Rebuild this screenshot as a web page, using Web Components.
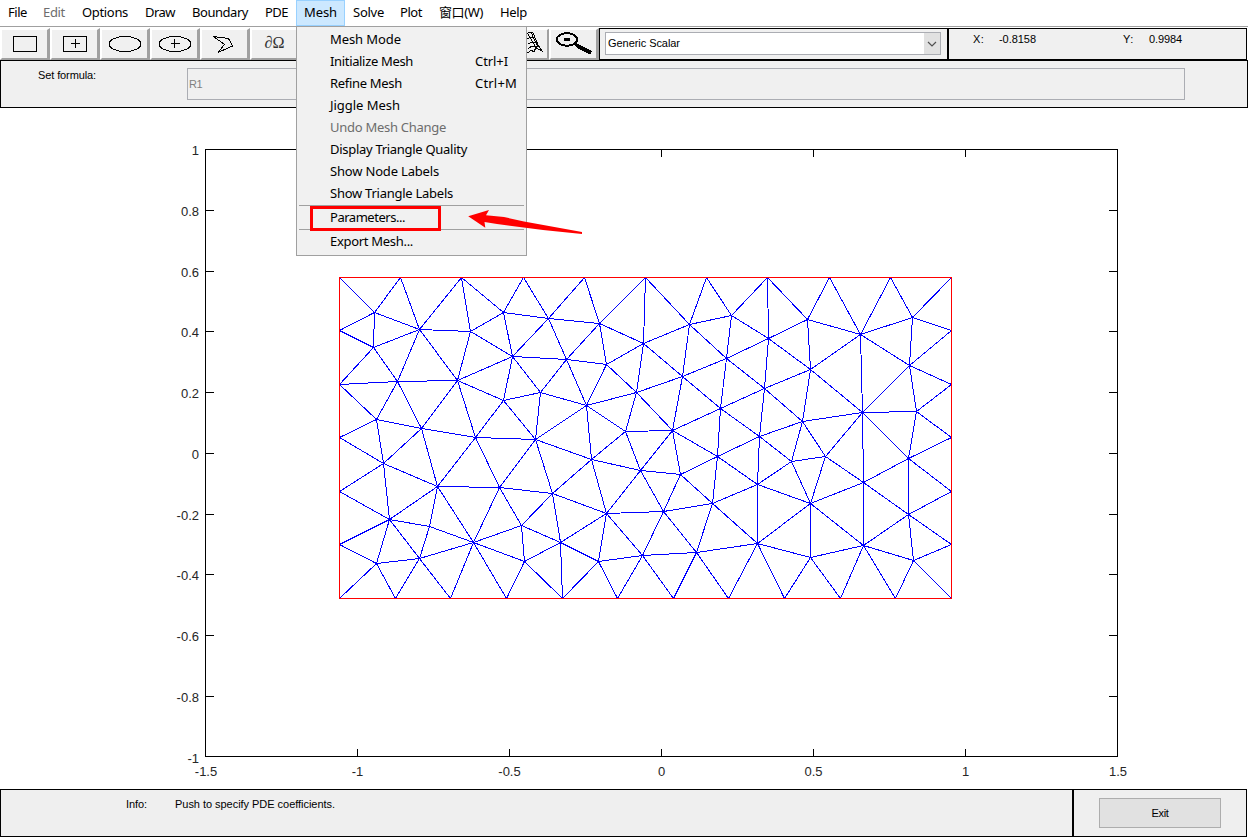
<!DOCTYPE html>
<html lang="en"><head><meta charset="utf-8"><title>PDE Modeler</title>
<style>html,body{margin:0;height:838px;overflow:hidden;background:#fff}</style></head>
<body><pde-app></pde-app>
<script>
const define = (name, html, setup) => customElements.define(name, class extends HTMLElement {
  connectedCallback() {
    if (this.shadowRoot) return;
    const t = document.createElement('template');
    t.innerHTML = html;
    this.attachShadow({mode: 'open'}).append(t.content.cloneNode(true));
    if (setup) setup(this, this.shadowRoot);
  }
});

// Label whose tracking is adjusted so the text fills the width in "w".
define('fit-text', `<style>:host{display:inline-block;white-space:pre}span{display:inline-block}</style><span><slot></slot></span>`, (el, root) => {
  const s = root.querySelector('span'), w = +el.getAttribute('w');
  if (!w) return;
  const gap = (w - s.getBoundingClientRect().width) / [...el.textContent].length;
  s.style.letterSpacing = gap.toFixed(3) + 'px';
  el.style.width = w + 'px';
});

define('menu-title', `<style>
:host{display:flex;box-sizing:border-box;height:26px;padding:0 8px 2px;align-items:center;margin-right:1px}
:host([off]){color:#6d6d6d}
:host([open]){background:#cce8ff;box-shadow:inset 0 0 0 1px #99d1ff}
</style><slot></slot>`);

define('menu-bar', `<style>
:host{display:flex;box-sizing:border-box;height:27px;border-bottom:1px solid #a0a0a0;background:#fff;font:13px/18px "Noto Sans","Noto Sans CJK SC",sans-serif;color:#000}
.tight{margin-right:0}
</style>
<menu-title class="tight"><fit-text w="19">File</fit-text></menu-title>
<menu-title off><fit-text w="22">Edit</fit-text></menu-title>
<menu-title><fit-text w="46">Options</fit-text></menu-title>
<menu-title><fit-text w="30">Draw</fit-text></menu-title>
<menu-title><fit-text w="56">Boundary</fit-text></menu-title>
<menu-title class="tight"><fit-text w="23">PDE</fit-text></menu-title>
<menu-title open class="tight"><fit-text w="33">Mesh</fit-text></menu-title>
<menu-title class="tight"><fit-text w="31">Solve</fit-text></menu-title>
<menu-title><fit-text w="22">Plot</fit-text></menu-title>
<menu-title><fit-text w="44">窗口(W)</fit-text></menu-title>
<menu-title><fit-text w="27">Help</fit-text></menu-title>`);

define('menu-row', `<style>
:host{display:flex;box-sizing:border-box;height:22px;align-items:center;padding:0 0 2px 33px}
:host([off]){color:#6d6d6d}
.main{width:145px}
</style><div class="main"><slot></slot></div><slot name="key"></slot>`);

define('drop-menu', `<style>
:host{display:block;box-sizing:border-box;position:absolute;left:296px;top:26px;width:231px;height:230px;padding-top:2px;background:#f1f1f1;border:1px solid #a0a0a0;font:13px/18px "Noto Sans",sans-serif;color:#000}
hr{border:0;height:1px;background:#a0a0a0;margin:0 2px 0}
hr+menu-row{height:23px;padding-bottom:1px}
</style>
<menu-row><fit-text w="71">Mesh Mode</fit-text></menu-row>
<menu-row><fit-text w="83">Initialize Mesh</fit-text><fit-text slot="key" w="33">Ctrl+I</fit-text></menu-row>
<menu-row><fit-text w="72">Refine Mesh</fit-text><fit-text slot="key" w="42">Ctrl+M</fit-text></menu-row>
<menu-row><fit-text w="70">Jiggle Mesh</fit-text></menu-row>
<menu-row off><fit-text w="116">Undo Mesh Change</fit-text></menu-row>
<menu-row><fit-text w="137">Display Triangle Quality</fit-text></menu-row>
<menu-row><fit-text w="109">Show Node Labels</fit-text></menu-row>
<menu-row><fit-text w="123">Show Triangle Labels</fit-text></menu-row>
<hr><menu-row><fit-text w="75">Parameters...</fit-text></menu-row>
<hr><menu-row><fit-text w="83">Export Mesh...</fit-text></menu-row>`);

// Callout drawn over the menu: frame and arrow.
define('call-out', `<style>:host{display:block;position:absolute;left:300px;top:200px;width:290px;height:40px}svg{display:block}</style>
<svg width="290" height="40"><rect x="11.5" y="7.5" width="128" height="22" fill="none" stroke="#f00" stroke-width="3"/>
<path d="M168.2 16.3 189 10 186 15.2 204 17 224 21.5 282 32V34L243 30 197 24 184.5 22 185.3 27.8Z" fill="#f00"/></svg>`);

define('tool-button', `<style>
:host{display:block;box-sizing:border-box;width:50px;height:32px;flex:none}
svg{display:block;width:100%;height:32px}
</style><svg viewBox="0 0 50 32" preserveAspectRatio="xMinYMin slice"><path fill="#fff" d="M0 0H50L47 2H2V30L0 32Z"/><path fill="#a0a0a0" d="M50 0V32H0L2 30H47V2Z"/><path fill="#f0f0f0" d="M2 2H47V30H2Z"/></svg>`, (el, root) => {
  const art = {
    rect: '<path d="M13.5 8.5h23v15h-23z"/>',
    rectc: '<path d="M13.5 8.5h23v15h-23zM21 15.5h9M25.5 11v9"/>',
    ell: '<ellipse cx="25" cy="16" rx="16" ry="7.5"/>',
    ellc: '<ellipse cx="25" cy="16" rx="16" ry="7.5"/><path d="M21 15.5h9M24.5 11v9"/>',
    poly: '<path d="M13.5 8.5 28.5 10.5 32.5 18 18 24.5 24.5 16.5Z"/>',
    omega: '<text x="14.5" y="20" font-family="Liberation Serif" font-size="17" fill="#333" stroke="none" textLength="20" lengthAdjust="spacingAndGlyphs"><tspan font-style="italic">∂</tspan>Ω</text>',
    surf: '<path d="M20 22 26 6 30 4 33 5 36 12 38 17 42 23 38 21 36 19 34 24 31 22 28 25 24 22M28 6 32 13 37 21M31 4 34 11 38 19M27 11 31 9 35 10M28 16 32 14 37 14M28 21 32 18 38 18"/>',
    mag: '<ellipse cx="18" cy="11.5" rx="10.2" ry="6.3" stroke-width="2"/><path stroke-width="2.4" d="M15 11.5h6M25 15l4 3"/><path stroke-width="4" d="M28 17.5 42 25"/>'
  }[el.getAttribute('icon')];
  if (art) {
    const g = document.createElementNS('http://www.w3.org/2000/svg', 'g');
    g.setAttribute('fill', 'none'); g.setAttribute('stroke', '#000'); g.setAttribute('shape-rendering', 'crispEdges');
    g.innerHTML = art;
    root.querySelector('svg').append(g);
  }
});

define('tool-strip', `<style>
:host{display:flex;height:32px;padding-top:1px;background:#fff;font:11px/13px "Liberation Sans",Arial,sans-serif;color:#000}
.panel{box-sizing:border-box;height:32px;border:1px solid #000;background:#f0f0f0;display:flex}
.combo{width:349px;padding:3px 0 0 5px}
.select{box-sizing:border-box;width:336px;height:23px;border:1px solid #abadb3;background:#fff;display:flex;align-items:center;justify-content:space-between;padding-left:2px}
.drop{width:16px;height:21px;background:#e1e1e1}
.drop svg{display:block}
.xy{width:299px;padding:4px 0 0 24px}
.xy fit-text:nth-child(1){margin-right:15px}.xy fit-text:nth-child(2){margin-right:87px}.xy fit-text:nth-child(3){margin-right:15px}
</style>
<tool-button icon="rect"></tool-button><tool-button icon="rectc"></tool-button><tool-button icon="ell"></tool-button><tool-button icon="ellc"></tool-button><tool-button icon="poly"></tool-button><tool-button icon="omega"></tool-button><tool-button></tool-button><tool-button></tool-button><tool-button></tool-button><tool-button></tool-button><tool-button icon="surf" style="width:49px"></tool-button><tool-button icon="mag"></tool-button>
<div class="panel combo"><div class="select"><fit-text w="72">Generic Scalar</fit-text><div class="drop"><svg width="16" height="21"><path d="M4 9l4 4 4-4" fill="none" stroke="#505050" stroke-width="1.2"/></svg></div></div></div>
<div class="panel xy"><fit-text w="11">X:</fit-text><fit-text w="37">-0.8158</fit-text><fit-text w="11">Y:</fit-text><fit-text w="33">0.9984</fit-text></div>`);

define('formula-bar', `<style>
:host{display:flex;box-sizing:border-box;height:48px;border:1px solid #000;background:#f0f0f0;padding:7px 0 0 37px;font:11px/13px "Liberation Sans",Arial,sans-serif;color:#000}
.label{width:149px;padding-top:1px}
.field{box-sizing:border-box;width:998px;height:32px;border:1px solid #abadb3;color:#808080;padding:9px 0 0 1px}
</style><div class="label"><fit-text w="58">Set formula:</fit-text></div><div class="field"><fit-text w="13">R1</fit-text></div>`);

define('mesh-plot', `<style>:host{display:block;height:681px}svg{display:block}text{font:13px "Liberation Sans",Arial,sans-serif;fill:#262626}</style>
<svg width="1248" height="681" viewBox="0 108 1248 681"><g id="axes" fill="none" stroke="#000" shape-rendering="crispEdges"></g><g id="labels"></g><g id="mesh" fill="none" stroke="#00f" shape-rendering="crispEdges"></g><rect x="339.5" y="277.5" width="612" height="321" fill="none" stroke="#f00" shape-rendering="crispEdges"/></svg>`, (el, root) => {
  let d = 'M205.5 149.5H1117.5V756.5H205.5Z', labels = '';
  ['-1.5', '-1', '-0.5', '0', '0.5', '1', '1.5'].forEach((s, i) => {
    const x = 205.5 + 152 * i;
    d += `M${x} 149v8M${x} 757v-8`;
    labels += `<text x="${x + (i && i < 6 ? 0 : 0.5)}" y="776" text-anchor="middle">${s}</text>`;
  });
  ['1', '0.8', '0.6', '0.4', '0.2', '0', '-0.2', '-0.4', '-0.6', '-0.8', '-1'].forEach((s, i) => {
    const y = Math.min(756, Math.round(149 + 60.75 * i)) + .5;
    d += `M205 ${y}h9M1118 ${y}h-9`;
    labels += `<text x="199" y="${y + (i === 10 ? 6.5 : 5.5)}" text-anchor="end">${s}</text>`;
  });
  root.querySelector('#axes').innerHTML = `<path d="${d}"/>`;
  root.querySelector('#labels').innerHTML = labels;

  const N = {};
  `A 374 312;B 419 329;C 470 331;D 373 347;E 397 381;F 457 380;G 503 312;H 512 356;I 503 400;J 540 392;K 376 419;L 421 428;M 475 437;N 535 439;O 548 318;P 599 323;Q 643 343;R 689 324;S 731 315;T 566 359;U 606 364;V 726 358;W 682 376;X 636 392;Y 586 405;Z 720 408;a 625 431;b 672 430;c 807 319;d 860 334;e 912 317;f 768 338;g 810 369;h 909 365;i 764 388;j 862 412;k 916 411;l 802 421;m 759 436;n 383 463;o 437 486;p 499 487;q 389 519;r 429 526;s 473 542;t 521 525;u 376 563;v 419 558;w 524 561;x 591 459;y 640 470;z 680 474;AA 717 456;AB 552 493;AC 606 513;AD 663 511;AE 712 503;AF 560 542;AG 598 561;AH 642 555;AI 696 552;AJ 791 461;AK 825 456;AL 757 484;AM 863 482;AN 908 458;AO 810 503;AP 757 543;AQ 810 557;AR 863 545;AS 908 514;AT 913 560`
    .split(';').forEach(s => { const [k, x, y] = s.split(' '); N[k] = [+x, +y]; });
  for (let i = 0; i <= 10; i++) N['t' + i] = [Math.round(339 + 61.2 * i), 277];
  for (let i = 0; i <= 11; i++) N['b' + i] = [Math.round(339 + 55.64 * i), 598];
  for (let i = 1; i <= 5; i++) { const y = Math.floor(277 + 53.5 * i); N['L' + i] = [339, y]; N['R' + i] = [951, y]; }
  const edges = `t0 A;t1 A B;t2 B C G;t3 G O;t4 O P;t5 P Q R;t6 R S;t7 S f c;t8 c d;t9 d e;t10 e;L1 A D;A D B;D B;L2 D E K;E D B F K L;F B C H I M L;C B G H;G O H;O H P T;H T J I;I J M N;J T Y N;T P U Y;P Q U;U Q X Y;Q R W X;R S V W;S V f;V f i Z W;f c g i;W X Z b;X Y a b;Y N x a;a b x y;b Z AA z y;Z i m AA;i g l m;c d g;d e g h j;e R1 h;h R1 R2 j k;g j l;l j m AJ AK;j k AK AM AN;k R2 R3 AN;m AJ AL AA;AN R3 R4 AM AS;AM AK AO AR AS;AK AJ AO;AJ AL AO;AL AA AE AO AP;AA z AE;AO AP AQ AR;AP AE AI AQ b7 b8;AQ AR b8 b9;AR b9 b10 AT AS;AT b10 b11 R5;AS R4 R5 AT;K L3 n L;L M o n;n L3 L4 o q;o M p q r s;M N p;N p x AB;p AB t s;t AB AF s w;q L4 L5 r v u;r s v;s v w b2 b3;u L5 b0 b1 v;v b1 b2;w b3 b4 AF;AF AB AC AG b4;AB x AC;x AC y;y AC AD z;z AD AE;AC AD AG AH;AD AE AH AI;AE AI;AG AH b4 b5;AH AI b5 b6;AI b6 b7`;
  let m = '';
  for (const row of edges.split(';')) {
    const [p, ...qs] = row.split(' ');
    for (const q of qs) m += `M${N[p][0] + .5} ${N[p][1] + .5}L${N[q][0] + .5} ${N[q][1] + .5}`;
  }
  root.querySelector('#mesh').innerHTML = `<path d="${m}"/>`;
});

define('status-bar', `<style>
:host{display:flex;height:48px;font:11px/13px "Liberation Sans",Arial,sans-serif;color:#000}
div{box-sizing:border-box;height:48px;border:1px solid #000;background:#efefef}
.info{width:1073px;padding:8px 0 0 125px;display:flex;gap:28px}
.exit{width:174px;padding:8px 0 0 25px}
button{box-sizing:border-box;display:flex;align-items:center;justify-content:center;width:122px;height:30px;padding:0;border:1px solid #adadad;background:#e1e1e1;font:inherit;color:inherit}
</style><div class="info"><fit-text w="21">Info:</fit-text><fit-text w="160">Push to specify PDE coefficients.</fit-text></div><div class="exit"><button><fit-text w="17">Exit</fit-text></button></div>`);

define('pde-app', `<style>:host{display:flex;flex-direction:column;position:relative;width:1248px;height:838px;background:#fff}</style>
<menu-bar></menu-bar><tool-strip></tool-strip><formula-bar></formula-bar><mesh-plot></mesh-plot><status-bar></status-bar><drop-menu></drop-menu><call-out></call-out>`);
</script></body></html>
